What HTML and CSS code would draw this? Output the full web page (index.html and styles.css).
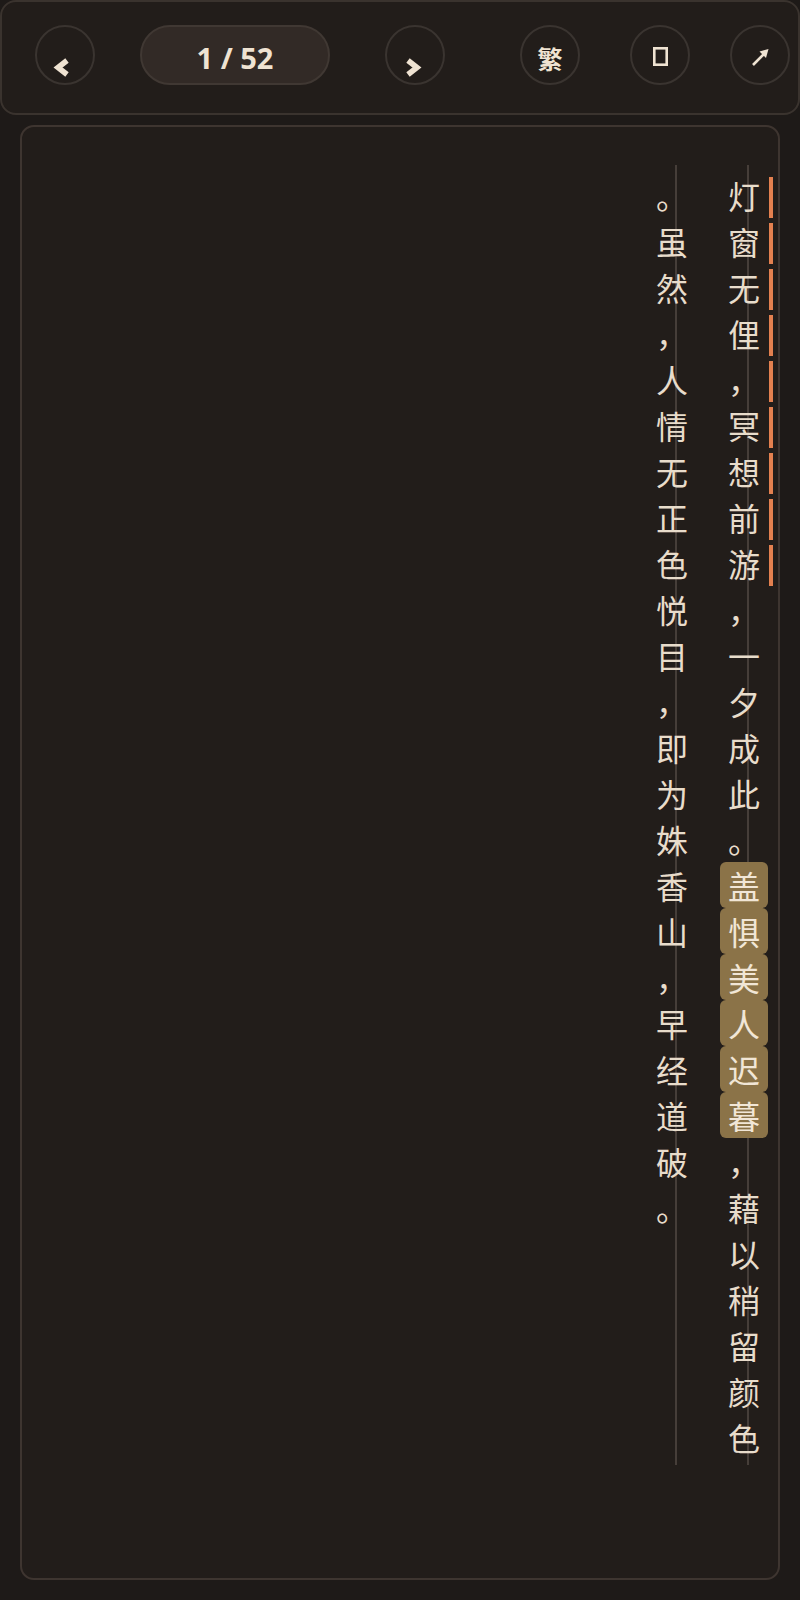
FILE: index.html
```html
<!DOCTYPE html>
<html lang="zh-CN">
<head>
<meta charset="utf-8">
<title>阅读</title>
<link rel="stylesheet" href="styles.css">
</head>
<body>
<header class="toolbar">
  <button class="btn round prev" aria-label="上一页">
    <svg viewBox="2 2 56 56" width="56" height="56"><polyline points="32,35.5 23,42.5 32,49.5" class="stroke"/></svg>
  </button>
  <div class="pager">1 / 52</div>
  <button class="btn round next" aria-label="下一页">
    <svg viewBox="2 2 56 56" width="56" height="56"><polyline points="23,35.5 32,42.5 23,49.5" class="stroke"/></svg>
  </button>
  <button class="btn round trad">繁</button>
  <button class="btn round layout" aria-label="版式">
    <svg viewBox="2 2 56 56" width="56" height="56"><rect x="24.3" y="23.3" width="12.4" height="16.4" class="thin"/></svg>
  </button>
  <button class="btn round share" aria-label="分享">
    <svg viewBox="2 2 56 56" width="56" height="56"><line x1="23" y1="40" x2="33.5" y2="29.5" class="thin"/><polygon points="38.5,24 29.5,26.5 36,33" class="fill"/></svg>
  </button>
</header>
<main class="sheet">
  <div class="columns">
    <div class="col">
      <span class="ch mk">灯</span><span class="ch mk">窗</span><span class="ch mk">无</span><span class="ch mk">俚</span><span class="ch mk">，</span><span class="ch mk">冥</span><span class="ch mk">想</span><span class="ch mk">前</span><span class="ch mk">游</span><span class="ch">，</span><span class="ch">一</span><span class="ch">夕</span><span class="ch">成</span><span class="ch">此</span><span class="ch">。</span><span class="ch hl">盖</span><span class="ch hl">惧</span><span class="ch hl">美</span><span class="ch hl">人</span><span class="ch hl">迟</span><span class="ch hl">暮</span><span class="ch">，</span><span class="ch">藉</span><span class="ch">以</span><span class="ch">稍</span><span class="ch">留</span><span class="ch">颜</span><span class="ch">色</span>
    </div>
    <div class="col">
      <span class="ch">。</span><span class="ch">虽</span><span class="ch">然</span><span class="ch">，</span><span class="ch">人</span><span class="ch">情</span><span class="ch">无</span><span class="ch">正</span><span class="ch">色</span><span class="ch">悦</span><span class="ch">目</span><span class="ch">，</span><span class="ch">即</span><span class="ch">为</span><span class="ch">姝</span><span class="ch">香</span><span class="ch">山</span><span class="ch">，</span><span class="ch">早</span><span class="ch">经</span><span class="ch">道</span><span class="ch">破</span><span class="ch">。</span>
    </div>
  </div>
</main>
</body>
</html>
```
FILE: styles.css
```css
* { box-sizing: border-box; }
html, body { margin: 0; padding: 0; }
body {
  width: 800px;
  height: 1600px;
  background: #1e1a18;
  color: #e8dccb;
  font-family: "Noto Sans", "Noto Sans CJK SC", sans-serif;
  overflow: hidden;
}

.toolbar {
  display: flex;
  align-items: flex-start;
  height: 115px;
  padding: 23px 0 0 33px;
  background: #221d1a;
  border: 2px solid #3a332e;
  border-radius: 16px;
}

.btn {
  margin: 0;
  padding: 0;
  background: transparent;
  color: #efe3d2;
  font: inherit;
  cursor: pointer;
}
.round {
  width: 60px;
  height: 60px;
  flex: 0 0 60px;
  border: 2px solid #3a3430;
  border-radius: 50%;
  display: flex;
  align-items: center;
  justify-content: center;
}
.round svg { display: block; }
.stroke { fill: none; stroke: #efe3d2; stroke-width: 5.5; stroke-linejoin: miter; stroke-linecap: butt; }
.thin { fill: none; stroke: #efe3d2; stroke-width: 2.6; }
.fill { fill: #efe3d2; }

.pager {
  margin-left: 45px;
  width: 190px;
  height: 60px;
  flex: 0 0 190px;
  border: 2px solid #403833;
  border-radius: 30px;
  background: #322a26;
  display: flex;
  align-items: center;
  justify-content: center;
  padding-top: 5px;
  font-family: "Noto Sans", sans-serif;
  font-weight: 700;
  font-size: 29px;
  color: #efe3d2;
}
.next { margin-left: 55px; }
.trad {
  margin-left: 75px;
  font-family: "Noto Sans CJK SC", sans-serif;
  font-weight: 700;
  font-size: 25px;
  padding-top: 5px;
}
.layout { margin-left: 50px; }
.share { margin-left: 40px; }

.sheet {
  margin: 10px 20px 0;
  height: 1455px;
  background: #221d1a;
  border: 2px solid #3e3530;
  border-radius: 14px;
}
.columns {
  display: flex;
  flex-direction: row-reverse;
  gap: 24px;
  padding: 38px 10px 0 0;
}
.col {
  width: 48px;
  flex: 0 0 48px;
  height: 1300px;
  padding-top: 7px;
  display: flex;
  flex-direction: column;
  align-items: flex-start;
  background: linear-gradient(#463e39, #463e39) no-repeat 27px 0 / 2px 100%;
}
.ch {
  box-sizing: content-box;
  display: flex;
  align-items: center;
  justify-content: center;
  width: 48px;
  height: 46px;
  flex: 0 0 46px;
  font-family: "Noto Sans CJK SC", sans-serif;
  font-weight: 400;
  font-size: 32px;
  line-height: 46px;
  color: #e8dccb;
}
.mk {
  padding-right: 5px;
  background: linear-gradient(#e3804f, #e3804f) no-repeat right 0 top 5px / 4px 41px;
}
.hl {
  background: #8b7348;
  border-radius: 6px;
  color: #f1e6d6;
}
```
